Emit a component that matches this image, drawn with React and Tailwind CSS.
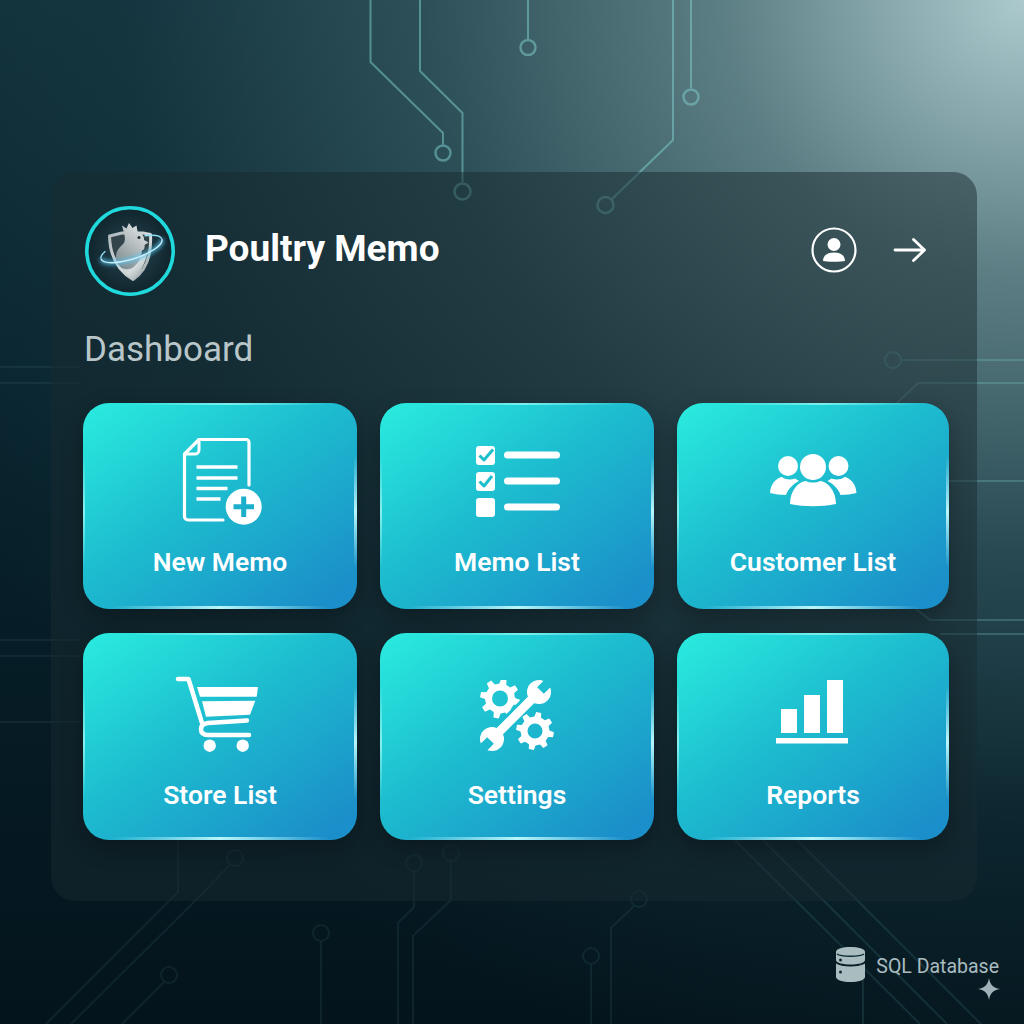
import React from 'react';

function gearPath(cx, cy, outer, inner, hole, teeth = 8) {
  const pts = [];
  const step = (Math.PI * 2) / teeth;
  for (let i = 0; i < teeth; i++) {
    const a = i * step + step / 4;
    const at = (r, off) => `${(cx + r * Math.cos(a + off)).toFixed(2)} ${(cy + r * Math.sin(a + off)).toFixed(2)}`;
    pts.push(at(inner, -step * 0.3), at(outer, -step * 0.17), at(outer, step * 0.17), at(inner, step * 0.3));
  }
  const ring = `M${cx - hole} ${cy}a${hole} ${hole} 0 1 0 ${hole * 2} 0a${hole} ${hole} 0 1 0 ${-hole * 2} 0Z`;
  return `M${pts.join('L')}Z${ring}`;
}

function NewMemoIcon() {
  return (
    <svg width="83" height="90" viewBox="0 0 83 90" fill="none" stroke="white" strokeLinecap="round" strokeLinejoin="round">
      <path d="M42 84H7a3.5 3.5 0 0 1-3.500-3.500V18L18 3.500H65a3 3 0 0 1 3 3V49" strokeWidth="3.200" />
      <path d="M18 3.500V14a4 4 0 0 1-4 4H3.500" strokeWidth="3" />
      <path d="M15.500 31H56.500M15.500 42H56.500M15.500 52.500H46.500M15.500 63H39.500" strokeWidth="3.600" strokeLinecap="butt" />
      <circle cx="62.700" cy="70.700" r="18" fill="white" stroke="none" />
      <path d="M62.700 60.500V81M52.500 70.700H73" stroke="#1cafcb" strokeWidth="5" strokeLinecap="butt" />
    </svg>
  );
}

function MemoListIcon() {
  return (
    <svg width="85" height="72" viewBox="0 0 85 72" fill="none">
      <rect x="0" y="0" width="19" height="19" rx="3" fill="white" />
      <rect x="0" y="26" width="19" height="19" rx="3" fill="white" />
      <rect x="0" y="52" width="19" height="19" rx="3" fill="white" />
      <path d="M3.500 9.500L8 14L17 3.500M3.500 35.500L8 40L16 30" stroke="#1ebfcd" strokeWidth="3" strokeLinejoin="round" />
      <path d="M31.500 9H80.500M31.500 35H80.500M31.500 61H80.500" stroke="white" strokeWidth="7" strokeLinecap="round" />
    </svg>
  );
}

function CustomersIcon() {
  const side = 'M1 40C1.500 31 7 25 13 24C17 27 22 27 26 25.500L30 28C24 31 19 36 17 42C11 42 6 41 1 40Z';
  return (
    <svg width="88" height="56" viewBox="0 0 88 56" fill="white">
      <circle cx="44" cy="14" r="13" />
      <circle cx="19" cy="13" r="10" />
      <circle cx="69.500" cy="13" r="10" />
      <path d="M21 51C21 37 30 28.500 37 28C41 30 47 30 51 28C58 28.500 67 37 67 51C52 54 36 54 21 51Z" />
      <path d={side} />
      <path d={side} transform="translate(88.500 0) scale(-1 1)" />
    </svg>
  );
}

function CartIcon() {
  return (
    <svg width="86" height="78" viewBox="0 0 86 78" fill="none">
      <path d="M3 3H13.500L27 47" stroke="white" strokeWidth="4.500" strokeLinecap="round" strokeLinejoin="round" />
      <path d="M72 44.500L33 47Q26 48 26 53Q26 59 33 59H74" stroke="white" strokeWidth="4.500" strokeLinecap="round" />
      <path d="M22 11H83L81.700 20.700H25ZM27 25.300L80.300 24.700L75 38.700L31 40.700Z" fill="white" />
      <circle cx="34.700" cy="69.700" r="6.200" fill="white" />
      <circle cx="67.700" cy="69.700" r="6.200" fill="white" />
    </svg>
  );
}

function SettingsIcon() {
  return (
    <svg width="76" height="74" viewBox="0 0 76 74">
      <defs>
        <mask id="gearCut" maskUnits="userSpaceOnUse" x="0" y="0" width="76" height="74">
          <rect width="76" height="74" fill="white" />
          <path d="M60 11L11 60" stroke="black" strokeWidth="15" />
        </mask>
        <mask id="wrenchCut" maskUnits="userSpaceOnUse" x="0" y="0" width="76" height="74">
          <rect width="76" height="74" fill="white" />
          <path d="M60.500 10.500L76 -5M10.500 60.500L-5 76" stroke="black" strokeWidth="9.500" />
        </mask>
      </defs>
      <g mask="url(#gearCut)">
        <path d={gearPath(20, 18.500, 20, 15, 8)} fill="white" fillRule="evenodd" />
      </g>
      <path d={gearPath(55, 51, 19, 14.500, 7.500)} fill="white" fillRule="evenodd" />
      <g mask="url(#wrenchCut)" fill="white">
        <circle cx="59" cy="12" r="12" />
        <circle cx="12" cy="59" r="12" />
        <path d="M59 12L12 59" stroke="white" strokeWidth="9" />
      </g>
    </svg>
  );
}

function ReportsIcon() {
  return (
    <svg width="72" height="64" viewBox="0 0 72 64" fill="white">
      <rect x="5" y="29" width="16" height="24" />
      <rect x="28" y="15" width="16" height="38" />
      <rect x="51" y="0" width="16" height="53" />
      <rect x="0" y="58" width="72" height="5.500" />
    </svg>
  );
}

function Logo() {
  return (
    <svg width="90" height="90" viewBox="0 0 90 90" fill="none">
      <defs>
        <radialGradient id="logoBg" cx="50%" cy="50%" r="50%">
          <stop offset="0%" stopColor="#264651" />
          <stop offset="100%" stopColor="#10242c" />
        </radialGradient>
        <linearGradient id="silver" x1="0" y1="0" x2="1" y2="1">
          <stop offset="0%" stopColor="#aeb8bb" />
          <stop offset="55%" stopColor="#d6dcdd" />
          <stop offset="100%" stopColor="#8e9a9e" />
        </linearGradient>
        <linearGradient id="hen" x1="0.800" y1="0" x2="0.200" y2="1">
          <stop offset="0%" stopColor="#e4e8e8" />
          <stop offset="100%" stopColor="#7d8a8f" />
        </linearGradient>
        <filter id="glow" x="-30%" y="-100%" width="160%" height="300%">
          <feGaussianBlur stdDeviation="2" />
        </filter>
      </defs>
      <circle cx="45" cy="45" r="43.200" fill="url(#logoBg)" stroke="#1fd9dc" strokeWidth="3.600" />
      <path d="M24.500 30L37 27H58L65.500 28.500C66.500 46 63.500 63 48 73.500C32 64 25 49 24.500 30Z" fill="#33444b" stroke="url(#silver)" strokeWidth="3" strokeLinejoin="round" />
      <path d="M37 52L62 48C60 58 55 67 48 73.500C42 70 36 62 33 55Z" fill="url(#silver)" />
      <path d="M39 27L37 19.500L41.500 22.500L44 17L47.500 22L51.500 19.500L52.500 25.500C57 27 59.500 30.500 59 34L63.500 36.500L59.500 39C60 42 59 44 57 44.500C56.500 50 54 57 48 61.500C40 66 32 61 31 52C30.500 45 35 41 38.500 37.500C40.500 35 40 31 39 27Z" fill="url(#hen)" />
      <circle cx="54" cy="31.500" r="1.500" fill="#1d2c32" />
      <g transform="rotate(-18 46.500 43)">
        <path d="M14.500 43A32 10 0 0 0 78.500 43" stroke="#52c6f2" strokeWidth="3.500" filter="url(#glow)" />
        <path d="M14.500 43A32 10 0 0 0 78.500 43" stroke="#cdeef9" strokeWidth="1.400" />
        <path d="M63 34.500A32 10 0 0 1 78.500 43" stroke="#8fdcf4" strokeWidth="1.400" />
        <path d="M14.500 43A32 10 0 0 1 21 37" stroke="#8fdcf4" strokeWidth="1.400" />
      </g>
    </svg>
  );
}

function UserIcon() {
  return (
    <svg width="46" height="46" viewBox="0 0 46 46" fill="none">
      <circle cx="23" cy="23" r="21.500" stroke="white" strokeWidth="2.200" />
      <circle cx="23" cy="17.500" r="6.500" fill="white" />
      <path d="M12 34C12 28 17 25.500 23 25.500C29 25.500 34 28 34 34C30 35 16 35 12 34Z" fill="white" />
    </svg>
  );
}

function ArrowIcon() {
  return (
    <svg width="34" height="24" viewBox="0 0 34 24" fill="none" stroke="white" strokeWidth="2.800" strokeLinecap="round" strokeLinejoin="round">
      <path d="M2 12H31.500M20.500 1.500L31.500 12L20.500 22.500" />
    </svg>
  );
}

function DatabaseIcon() {
  return (
    <svg width="29" height="35" viewBox="0 0 29 35" fill="#a9bcc0">
      <path d="M0 5C0 1.500 7 0 14.500 0S29 1.500 29 5V13C29 16 22 17.500 14.500 17.500S0 16 0 13Z" />
      <path d="M0 16.500C3 18.500 8 19.500 14.500 19.500S26 18.500 29 16.500V30C29 33 22 35 14.500 35S0 33 0 30Z" />
      <path d="M1 7C5 10 24 10 28 7" fill="none" stroke="#0e2a33" strokeWidth="1.500" />
      <circle cx="4.500" cy="13" r="1.500" fill="#0e2a33" />
      <circle cx="4.500" cy="25" r="1.500" fill="#0e2a33" />
    </svg>
  );
}

function CircuitLines() {
  return (
    <svg className="absolute inset-0" width="1024" height="1024" viewBox="0 0 1024 1024" fill="none" stroke="#7fd2d2" strokeWidth="2">
      {/* top */}
      <g opacity="0.5">
        <path d="M370.500 0V62L443 133V145" />
        <circle cx="443" cy="153" r="7.500" strokeWidth="2.500" />
        <path d="M420 0V71L462.500 113V182" />
        <circle cx="462.500" cy="191.500" r="8" strokeWidth="2.500" />
        <path d="M528 0V39" />
        <circle cx="528" cy="47.500" r="7.500" strokeWidth="2.500" />
        <path d="M673 0V140L611 200" />
        <circle cx="605.500" cy="205" r="8" strokeWidth="2.500" />
        <path d="M691 0V88" />
        <circle cx="691" cy="97" r="7.500" strokeWidth="2.500" />
      </g>
      {/* right side */}
      <g opacity="0.26">
        <circle cx="893" cy="360" r="8" />
        <path d="M901 360H1024M1024 383H918L896 404M940 481H1024M1024 620H930L915 608M940 634H1024" />
      </g>
      {/* left side and bottom */}
      <g opacity="0.08">
        <path d="M0 367H80M0 383H80M0 640H80M0 656H80M0 722H80" />
        <path d="M178 840V892L46 1024M230 865L189 907L71 1024" />
        <circle cx="235" cy="858" r="8" />
        <circle cx="169" cy="975" r="8" />
        <path d="M164 982L122 1024" />
        <circle cx="321" cy="933" r="8" />
        <path d="M321 941V1024" />
        <circle cx="414" cy="863" r="8" />
        <path d="M414 871V907L398 923V1024" />
        <circle cx="451" cy="853" r="8" />
        <path d="M451 861V900L413 936V1024" />
        <circle cx="639" cy="899" r="8" />
        <path d="M634 906L611 928V1024" />
        <circle cx="591" cy="956" r="8" />
        <path d="M591 964V1024" />
      </g>
      <g opacity="0.12">
        <path d="M735 840L920 1024M763 840L947 1024M797 840L981 1024M863 980V1024" />
      </g>
    </svg>
  );
}

function Card({ label, icon, className, iconClass, labelClass }) {
  return (
    <div className={`relative flex flex-col items-center rounded-[26px] bg-[linear-gradient(145deg,#2aecdf_0%,#1dbdcf_44%,#1b8fc9_92%)] shadow-[0_8px_22px_rgba(0,0,0,0.28)] ${className}`}>
      <span className="absolute top-0 left-[15%] h-[2px] w-[75%] blur-[0.5px] bg-[linear-gradient(90deg,transparent,rgba(170,255,250,0.65),transparent)]" />
      <span className="absolute bottom-0 left-[10%] h-[3px] w-[80%] blur-[0.5px] bg-[linear-gradient(90deg,transparent,#b8f6fb,transparent)]" />
      <span className="absolute left-0 top-[25%] h-[55%] w-[2px] blur-[0.5px] bg-[linear-gradient(180deg,transparent,rgba(180,255,250,0.7),transparent)]" />
      <span className="absolute right-0 top-[25%] h-[55%] w-[3px] blur-[0.5px] bg-[linear-gradient(180deg,transparent,#b8f6fb,transparent)]" />
      <div className={`flex h-[100px] items-center justify-center ${iconClass}`}>{icon}</div>
      <div className={`mt-auto text-[26.5px] leading-[32px] font-semibold text-white ${labelClass}`}>{label}</div>
    </div>
  );
}

export default function App() {
  return (
    <div className="relative h-[1024px] w-[1024px] overflow-hidden pl-[51px] pt-[172px] font-['Roboto',sans-serif] bg-[radial-gradient(ellipse_1200px_1100px_at_100%_0%,rgba(172,202,206,1)_0%,rgba(100,135,140,0.9)_25%,rgba(62,100,108,0.62)_50%,rgba(30,70,80,0.28)_75%,rgba(20,50,60,0)_100%),linear-gradient(180deg,#112f39_0%,#07202a_50%,#04141c_100%)]">
      <CircuitLines />

      <div className="relative h-[729px] w-[926px] rounded-[24px] bg-[#172a30]/50 pl-[32px] pr-[28px] pt-[34px]">
        <div className="flex h-[90px] items-center justify-between pl-[2px] pr-[22px]">
          <div className="flex items-center gap-[30px]">
            <Logo />
            <h1 className="pb-[4px] text-[37px] font-bold text-white">Poultry Memo</h1>
          </div>
          <div className="mb-[2px] flex items-center gap-[36px]">
            <UserIcon />
            <ArrowIcon />
          </div>
        </div>

        <h2 className="mt-[34px] pl-[1px] text-[35px] leading-[40px] text-[#b9c6c9]">Dashboard</h2>

        <div className="mt-[33px] grid grid-cols-[274px_274px_272px] gap-x-[23px] gap-y-[24px]">
          <Card label="New Memo" icon={<NewMemoIcon />} className="h-[206px] pt-[28px]" iconClass="pl-[5px]" labelClass="mb-[31px]" />
          <Card label="Memo List" icon={<MemoListIcon />} className="h-[206px] pt-[29px]" iconClass="pl-[2px]" labelClass="mb-[31px]" />
          <Card label="Customer List" icon={<CustomersIcon />} className="h-[206px] pt-[28px]" iconClass="pr-[1px]" labelClass="mb-[31px]" />
          <Card label="Store List" icon={<CartIcon />} className="h-[207px] pt-[32px]" iconClass="pr-[4px]" labelClass="mb-[29px]" />
          <Card label="Settings" icon={<SettingsIcon />} className="h-[207px] pt-[34px]" iconClass="pl-[2px]" labelClass="mb-[29px]" />
          <Card label="Reports" icon={<ReportsIcon />} className="h-[207px] pt-[29px]" iconClass="pr-[3px]" labelClass="mb-[29px]" />
        </div>
      </div>

      <div className="relative mt-[46px] flex items-center justify-end gap-[11px] pr-[25px]">
        <DatabaseIcon />
        <span className="mt-[5px] text-[19.500px] leading-[24px] text-[#a9bcc0]">SQL Database</span>
        <svg className="absolute right-[24px] top-[31px]" width="22" height="22" viewBox="0 0 22 22" fill="#a0b2b6">
          <path d="M11 0C12 6.500 15 10 22 11C15 12 12 15.500 11 22C10 15.500 7 12 0 11C7 10 10 6.500 11 0Z" />
        </svg>
      </div>
    </div>
  );
}
